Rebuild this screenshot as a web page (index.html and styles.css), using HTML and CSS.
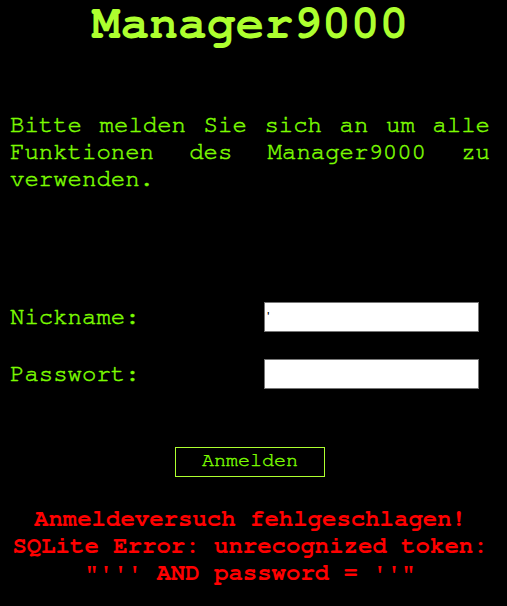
FILE: index.html
```html
<!DOCTYPE html>
<html lang="de">
<head>
<meta charset="utf-8">
<title>Manager9000</title>
<link rel="stylesheet" href="styles.css">
</head>
<body>
<div class="page">
  <h1 class="title">Manager9000</h1>
  <p class="intro">Bitte melden Sie sich an um alle Funktionen des Manager9000 zu verwenden.</p>
  <form class="login">
    <div class="fields">
      <label class="label" for="nick">Nickname:</label>
      <input class="field" id="nick" type="text" value="'">
      <label class="label" for="pw">Passwort:</label>
      <input class="field" id="pw" type="password">
    </div>
    <div class="actions">
      <button class="submit" type="button">Anmelden</button>
    </div>
  </form>
  <div class="error">Anmeldeversuch fehlgeschlagen!<br>SQLite Error: unrecognized token: "''' AND password = ''"</div>
</div>
</body>
</html>
```

FILE: styles.css
```css
html, body {
  margin: 0;
  padding: 0;
  background: #000;
}
body {
  font-family: "Nimbus Mono PS", "Nimbus Mono L", "FreeMono", "Courier", "Liberation Mono", monospace;
  color: #7cfc00;
}
.page {
  width: 480px;
  margin-left: 10px;
}
.title {
  margin: 0;
  font-size: 48px;
  font-weight: bold;
  line-height: normal;
  color: #adff2f;
  text-align: center;
}
.intro {
  margin: 64px 0 0;
  font-size: 24px;
  line-height: 27.2px;
  text-align: justify;
  -webkit-text-stroke: 0.5px currentColor;
}
.login {
  margin: 0;
}
.fields {
  margin-top: 108px;
  display: grid;
  grid-template-columns: 254px 215px;
  row-gap: 27px;
  align-items: center;
}
.label {
  font-size: 24px;
  line-height: 27px;
  padding-top: 2px;
  -webkit-text-stroke: 0.5px currentColor;
}
.field {
  box-sizing: border-box;
  width: 215px;
  height: 30px;
  margin: 0;
  border: 1px solid #767676;
  padding: 1px 2px;
  background: #fff;
  color: #000;
  font-family: "Liberation Sans", Arial, sans-serif;
  font-size: 13.33px;
  outline: none;
}
.actions {
  margin-top: 58px;
  display: flex;
  justify-content: center;
}
.submit {
  box-sizing: border-box;
  width: 150px;
  height: 30px;
  margin: 0;
  padding: 0 0 3px;
  background: #000;
  border: 1px solid #adff2f;
  color: #7cfc00;
  font-family: inherit;
  font-size: 20px;
  -webkit-text-stroke: 0.4px currentColor;
}
.error {
  margin-top: 29px;
  font-size: 24px;
  font-weight: bold;
  line-height: 27.2px;
  color: #ff0000;
  text-align: center;
}
```
